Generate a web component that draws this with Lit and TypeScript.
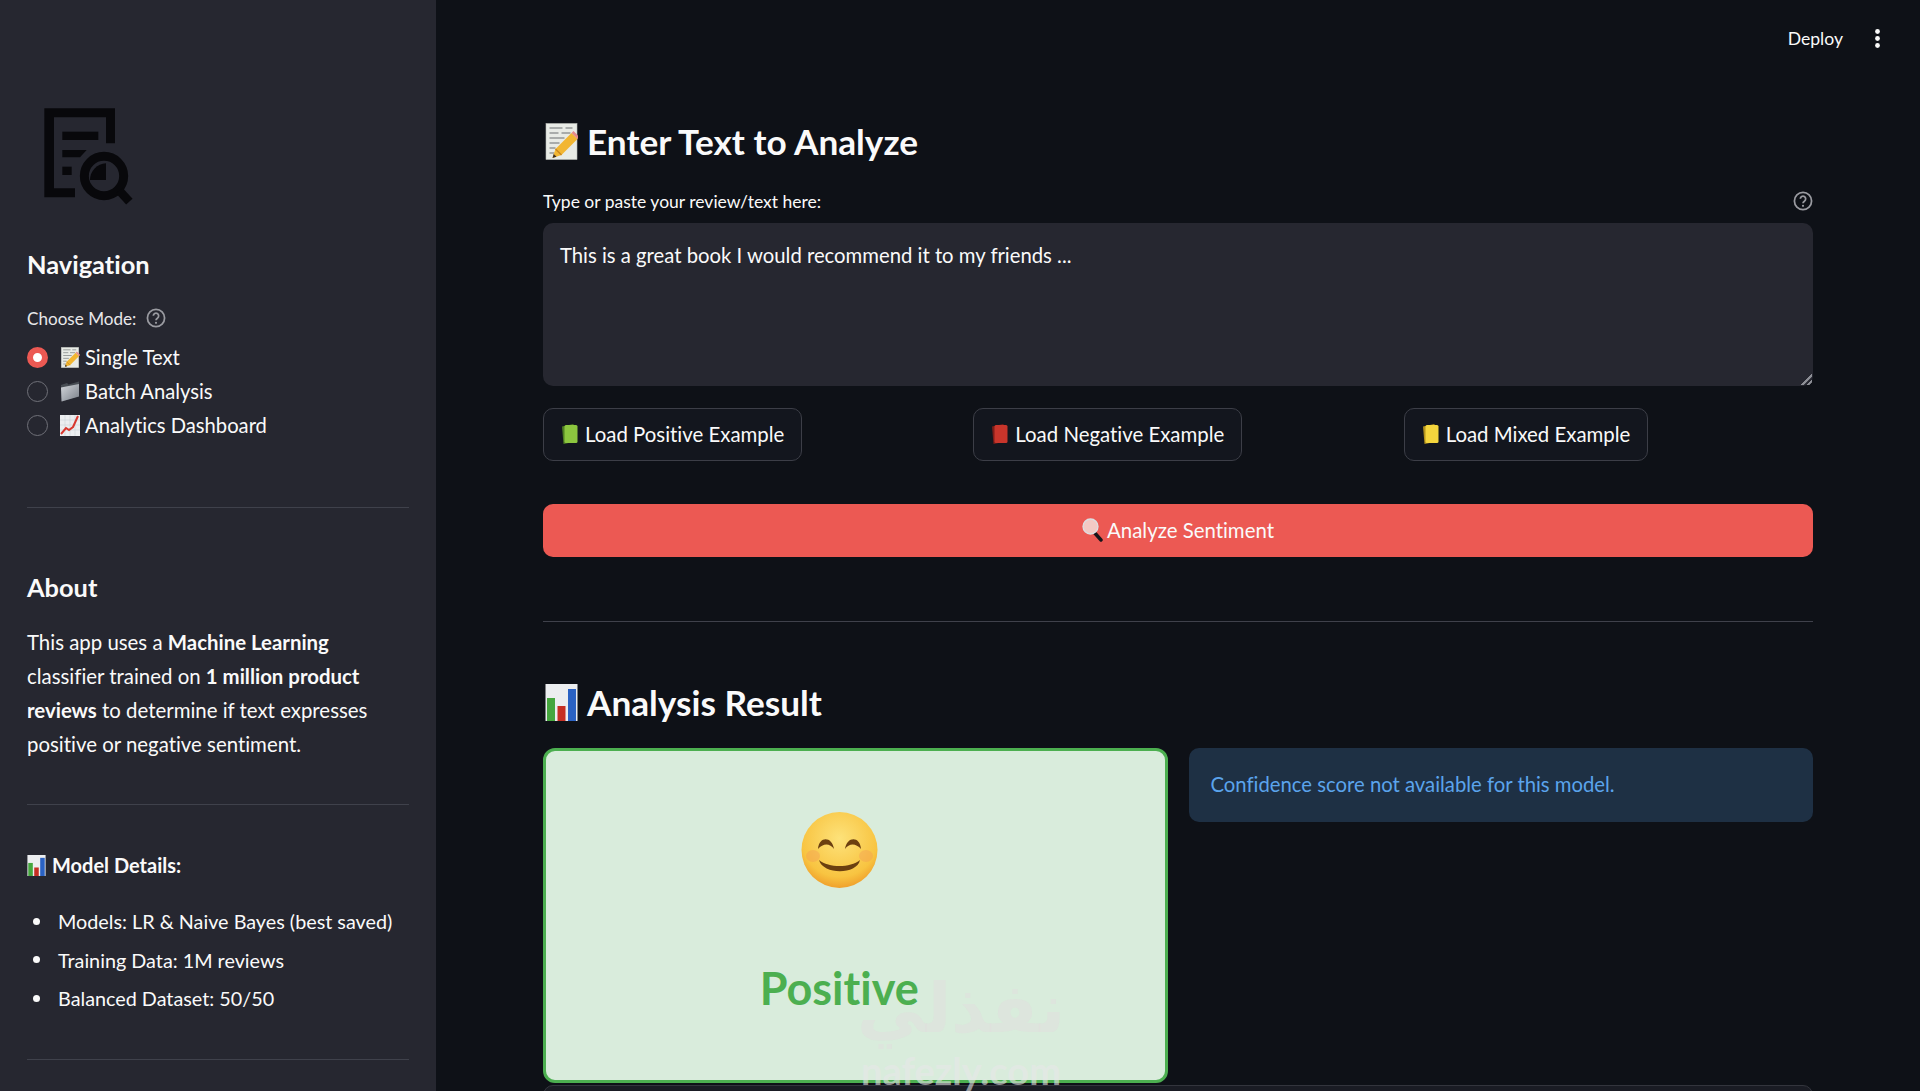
import { LitElement, html, css, svg } from "lit";
import { customElement } from "lit/decorators.js";

const memo = (cls: string) => html`<svg class=${cls} viewBox="0 0 32 37">
  <rect x="0.5" y="0.5" width="31" height="36" fill="#e8ebe6" stroke="#b9bdb8" stroke-width="0.6" />
  <g stroke="#6b6f70" stroke-width="1.1" fill="none">
    <path d="M4 5h13M20 5h7M4 10h9M16 10h9M4 15h15M4 20h10M4 25h6M4 30h5" />
  </g>
  <path d="M7 35l3-9L26 10l6 6-16 16z" fill="#f2b632" />
  <path d="M10 26l6 6" stroke="#c9851c" stroke-width="1.2" />
  <path d="M26 10l2-2 6 6-2 2z" fill="#e58a8a" />
  <path d="M7 35l1.2-4 2.8 2.8z" fill="#3a2c20" />
</svg>`;

const folder = (cls: string) => html`<svg class=${cls} viewBox="0 0 20 21">
  <defs>
    <linearGradient id="fold" x1="0" y1="0" x2="1" y2="1">
      <stop offset="0" stop-color="#d3d6db" />
      <stop offset="1" stop-color="#7a8089" />
    </linearGradient>
  </defs>
  <path d="M1 4l6-2 1.5 1.5L19 0.5V15L2 20.5z" fill="#474c53" />
  <path d="M1 6.5L19 3v12.5L1.5 20.5z" fill="url(#fold)" />
</svg>`;

const trend = (cls: string) => html`<svg class=${cls} viewBox="0 0 20 21">
  <rect width="20" height="21" fill="#eceef0" />
  <path d="M0 5h20M0 10h20M0 15h20M5 0v21M10 0v21M15 0v21" stroke="#cfd3d8" stroke-width="0.6" />
  <path d="M1 19l5-6 3 2 4-3 5-11" fill="none" stroke="#d8382f" stroke-width="2" />
</svg>`;

const bars = (cls: string) => html`<svg class=${cls} viewBox="0 0 32 37">
  <rect width="32" height="37" fill="#eceef0" />
  <rect x="1.5" y="14" width="8" height="23" fill="#45a63e" />
  <rect x="12" y="22" width="8" height="15" fill="#c62f24" />
  <rect x="22.5" y="5" width="8" height="32" fill="#2a62c4" />
</svg>`;

const book = (cls: string, cover: string, edge: string) => html`<svg class=${cls} viewBox="0 0 16 20">
  <path d="M0.5 2.5L12 0v18L2 20z" fill=${edge} />
  <rect x="3" y="1" width="13" height="18" rx="1.5" fill=${cover} />
</svg>`;

const lens = (cls: string) => html`<svg class=${cls} viewBox="0 0 21 24">
  <path d="M11 13l8 9" stroke="#15151a" stroke-width="3.4" stroke-linecap="round" />
  <circle cx="8.5" cy="8.5" r="7.5" fill="#f3c9c4" stroke="#dcdfe2" stroke-width="1.3" />
</svg>`;

const smile = html`<svg class="smile" viewBox="0 0 77 76">
  <defs>
    <radialGradient id="face" cx="0.5" cy="0.35" r="0.72">
      <stop offset="0" stop-color="#fde27a" />
      <stop offset="0.7" stop-color="#f8c441" />
      <stop offset="1" stop-color="#ec8f22" />
    </radialGradient>
  </defs>
  <circle cx="38.5" cy="38" r="38" fill="url(#face)" />
  <ellipse cx="12" cy="44" rx="7" ry="6" fill="#f39a55" opacity="0.4" />
  <ellipse cx="65" cy="44" rx="7" ry="6" fill="#f39a55" opacity="0.4" />
  <path d="M17 37c1-13 14-13 16 0c-4-6-11-6-16 0zM44 37c2-13 15-13 16 0c-5-6-12-6-16 0z" fill="#6b3f10" />
  <path d="M18 48c10 8 31 8 41 0c-3 15-37 15-41 0z" fill="#6b3f10" />
</svg>`;

const help = html`<svg class="help" viewBox="0 0 24 24" fill="none" stroke="currentColor">
  <circle cx="12" cy="12" r="10.3" stroke-width="2.1" />
  <path d="M8.8 9.4a3.2 3.2 0 1 1 4.9 2.8c-1.1.7-1.7 1.3-1.7 2.6" stroke-width="2.1" />
  <circle cx="12" cy="17.8" r="1.3" fill="currentColor" stroke="none" />
</svg>`;

const logoShapes = svg`
  <path d="M43 25H255V130H228V52H72V265H135V292H43Z" />
  <rect x="97" y="95" width="108" height="25" />
  <path d="M97 150H170L150 172H97Z" />
  <rect x="97" y="200" width="28" height="25" />
  <circle cx="222" cy="228" r="59" fill="none" stroke="#08080b" stroke-width="27" />
  <path d="M228 190V240H180A50 50 0 0 1 228 190Z" />
  <path d="M268 272L298 305" stroke="#08080b" stroke-width="26" />
`;

@customElement("app-root")
export class AppRoot extends LitElement {
  static styles = css`
    :host {
      display: block;
      height: 1091px;
      overflow: hidden;
      font-family: "Lato", "Noto Sans", sans-serif;
      font-variant-ligatures: none;
      color: #fafafa;
    }
    .app {
      position: relative;
      display: grid;
      grid-template-columns: 436px 1fr;
      height: 1091px;
      overflow: hidden;
      background: #0e1117;
    }
    .sidebar {
      background: #262730;
      padding: 0 27px;
      overflow: hidden;
    }
    .logo {
      display: block;
      width: 115px;
      height: 115px;
      margin: 100px 0 0 3px;
      fill: #08080b;
    }
    .side-title {
      margin: 32px 0 0;
      font-size: 25.4px;
      line-height: 34px;
      font-weight: 700;
    }
    .mode-label {
      display: flex;
      align-items: center;
      gap: 10px;
      margin-top: 25px;
      height: 24px;
      font-size: 17.1px;
      color: #e8e8ea;
    }
    .help {
      width: 20px;
      height: 20px;
      color: #9a9ba1;
      flex: none;
    }
    .radios {
      margin-top: 10px;
    }
    .radio {
      display: flex;
      align-items: center;
      height: 34px;
      font-size: 20.2px;
    }
    .dot {
      box-sizing: border-box;
      width: 21px;
      height: 21px;
      margin-right: 12px;
      border: 1.5px solid #6f7078;
      border-radius: 50%;
      flex: none;
    }
    .dot.on {
      border: 6.5px solid #ec5953;
      background: #fff;
    }
    .em-radio {
      width: 20px;
      height: 21px;
      margin-right: 5px;
      flex: none;
    }
    hr {
      height: 1px;
      margin: 0;
      border: 0;
      background: #3f414b;
    }
    .hr-nav {
      margin-top: 65px;
    }
    .hr-about {
      margin-top: 43px;
    }
    .hr-model {
      margin-top: 41px;
    }
    .about-title {
      margin-top: 62px;
    }
    .about {
      margin: 21px 0 0;
      font-size: 20.4px;
      line-height: 34px;
    }
    .about b {
      font-weight: 700;
    }
    .details {
      display: flex;
      align-items: center;
      gap: 6px;
      height: 28px;
      margin-top: 46px;
      font-size: 20px;
      font-weight: 700;
    }
    .em-details {
      width: 19px;
      height: 21px;
    }
    .facts {
      margin: 23px 0 0;
      padding: 0 0 0 6px;
      list-style: none;
      font-size: 19.8px;
      line-height: 38.5px;
    }
    .facts li {
      display: flex;
      align-items: center;
    }
    .facts li::before {
      content: "";
      width: 7px;
      height: 7px;
      margin-right: 18px;
      border-radius: 50%;
      background: #fafafa;
      flex: none;
    }
    .main {
      padding: 0 107px;
      min-width: 0;
    }
    .toolbar {
      display: flex;
      justify-content: flex-end;
      align-items: center;
      gap: 32px;
      height: 76px;
      margin-right: -67px;
      font-size: 17.6px;
    }
    .kebab {
      width: 5px;
      height: 19px;
      fill: #fafafa;
    }
    h2 {
      display: flex;
      align-items: center;
      gap: 9px;
      height: 44px;
      margin: 43px 0 0;
      font-size: 35.2px;
      font-weight: 700;
      white-space: nowrap;
    }
    .em-head {
      width: 33px;
      height: 37px;
      margin-left: 2px;
      flex: none;
    }
    .field-label {
      display: flex;
      justify-content: space-between;
      align-items: center;
      height: 24px;
      margin-top: 26px;
      font-size: 17.5px;
    }
    .box {
      position: relative;
      margin-top: 10px;
    }
    .box::after {
      content: "";
      position: absolute;
      right: 1px;
      bottom: 1px;
      width: 11px;
      height: 11px;
      background: linear-gradient(135deg, transparent 48%, #8d8f96 50%, #8d8f96 62%, transparent 64%, transparent 74%, #8d8f96 76%, #8d8f96 86%, transparent 88%);
    }
    textarea {
      display: block;
      box-sizing: border-box;
      width: 100%;
      height: 163px;
      padding: 16px 17px;
      border: 0;
      border-radius: 10px;
      outline: none;
      background: #262730;
      color: #fafafa;
      font: 20.3px/32px "Lato", "Noto Sans", sans-serif;
      font-variant-ligatures: none;
      resize: none;
    }
    .examples {
      display: grid;
      grid-template-columns: repeat(3, 1fr);
      gap: 21px;
      margin-top: 22px;
    }
    button {
      font-family: inherit;
      font-variant-ligatures: none;
      color: #fafafa;
    }
    .example {
      justify-self: start;
      display: flex;
      align-items: center;
      justify-content: center;
      gap: 7px;
      box-sizing: border-box;
      height: 53px;
      padding: 0 17px 2px;
      border: 1px solid #3c3e47;
      border-radius: 10px;
      background: #13161e;
      font-size: 20.4px;
    }
    .em-book {
      width: 17px;
      height: 20px;
      flex: none;
    }
    .analyze {
      display: flex;
      align-items: center;
      justify-content: center;
      gap: 4px;
      width: 100%;
      height: 53px;
      margin-top: 43px;
      padding-bottom: 2px;
      border: 0;
      border-radius: 10px;
      background: #ec5953;
      font-size: 20.4px;
    }
    .em-lens {
      width: 21px;
      height: 24px;
    }
    .hr-main {
      margin-top: 64px;
    }
    .hr-main + h2 {
      margin-top: 58px;
    }
    .results {
      display: grid;
      grid-template-columns: 1fr 1fr;
      gap: 21px;
      align-items: start;
      margin-top: 24px;
    }
    .verdict {
      display: flex;
      flex-direction: column;
      align-items: center;
      box-sizing: border-box;
      height: 335px;
      padding: 61px 32px 0 0;
      border: 3px solid #4caf50;
      border-radius: 12px;
      background: #d9ecdc;
    }
    .smile {
      width: 77px;
      height: 76px;
    }
    .verdict-text {
      margin-top: 72px;
      font-size: 45px;
      line-height: 56px;
      font-weight: 700;
      color: #4caf50;
    }
    .info {
      box-sizing: border-box;
      height: 74px;
      padding: 0 22px;
      border-radius: 10px;
      background: #1e3044;
      color: #5ba4ec;
      font-size: 20.3px;
      line-height: 73px;
    }
    .next {
      height: 40px;
      margin-top: 2px;
      border: 1px solid #33353d;
      border-radius: 10px;
      background: #1a1c24;
    }
    .mark {
      position: absolute;
      left: 855px;
      top: 970px;
      width: 212px;
      text-align: center;
      color: rgba(226, 222, 222, 0.5);
      pointer-events: none;
    }
    .mark-ar {
      font: 700 68px/78px "DejaVu Sans", sans-serif;
      white-space: nowrap;
    }
    .mark-en {
      font: 700 38px/44px "Lato", sans-serif;
      white-space: nowrap;
      color: rgba(232, 232, 232, 0.6);
    }
  `;

  render() {
    return html`
      <div class="app">
        <aside class="sidebar">
          <svg class="logo" viewBox="0 0 345 345">${logoShapes}</svg>
          <h3 class="side-title">Navigation</h3>
          <div class="mode-label">Choose Mode: ${help}</div>
          <div class="radios">
            <div class="radio"><span class="dot on"></span>${memo("em-radio")}Single Text</div>
            <div class="radio"><span class="dot"></span>${folder("em-radio")}Batch Analysis</div>
            <div class="radio"><span class="dot"></span>${trend("em-radio")}Analytics Dashboard</div>
          </div>
          <hr class="hr-nav" />
          <h3 class="side-title about-title">About</h3>
          <p class="about">
            This app uses a <b>Machine Learning</b> classifier trained on
            <b>1 million product reviews</b> to determine if text expresses
            positive or negative sentiment.
          </p>
          <hr class="hr-about" />
          <div class="details">${bars("em-details")}Model Details:</div>
          <ul class="facts">
            <li>Models: LR &amp; Naive Bayes (best saved)</li>
            <li>Training Data: 1M reviews</li>
            <li>Balanced Dataset: 50/50</li>
          </ul>
          <hr class="hr-model" />
        </aside>
        <main class="main">
          <div class="toolbar">
            <span>Deploy</span>
            <svg class="kebab" viewBox="0 0 5 19">
              <circle cx="2.5" cy="2.5" r="2.4" />
              <circle cx="2.5" cy="9.5" r="2.4" />
              <circle cx="2.5" cy="16.5" r="2.4" />
            </svg>
          </div>
          <h2>${memo("em-head")}Enter Text to Analyze</h2>
          <div class="field-label"><span>Type or paste your review/text here:</span>${help}</div>
          <div class="box">
            <textarea readonly .value=${"This is a great book I would recommend it to my friends ..."}></textarea>
          </div>
          <div class="examples">
            <button class="example">${book("em-book", "#8cc63f", "#4f7f22")}Load Positive Example</button>
            <button class="example">${book("em-book", "#c8352b", "#7d1d18")}Load Negative Example</button>
            <button class="example">${book("em-book", "#f4d53d", "#b3921c")}Load Mixed Example</button>
          </div>
          <button class="analyze">${lens("em-lens")}Analyze Sentiment</button>
          <hr class="hr-main" />
          <h2>${bars("em-head")}Analysis Result</h2>
          <div class="results">
            <div class="verdict">
              ${smile}
              <div class="verdict-text">Positive</div>
            </div>
            <div class="info">Confidence score not available for this model.</div>
          </div>
          <div class="next"></div>
        </main>
        <div class="mark">
          <div class="mark-ar" lang="ar" dir="rtl">نفذلي</div>
          <div class="mark-en">nafezly.com</div>
        </div>
      </div>
    `;
  }
}
